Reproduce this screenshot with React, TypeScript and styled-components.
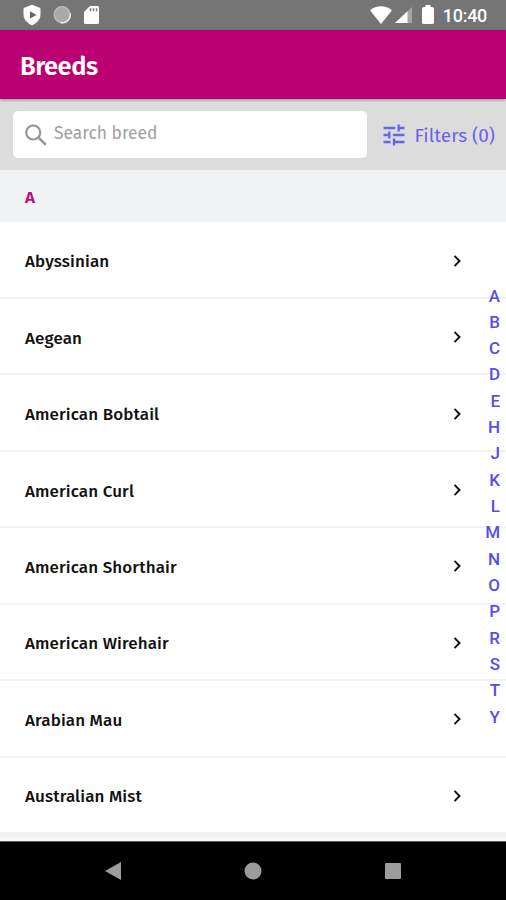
import React from "react";
import styled, { createGlobalStyle } from "styled-components";

const GlobalStyle = createGlobalStyle`
  *, *::before, *::after { box-sizing: border-box; }
  body { margin: 0; background: #f0f2f4; }
`;

const Screen = styled.div`
  position: relative;
  display: flex;
  flex-direction: column;
  width: 506px;
  height: 900px;
  overflow: hidden;
  background: #f0f2f4;
  font-family: "Fira Sans", "Noto Sans", sans-serif;
`;

const StatusBar = styled.div`
  display: flex;
  flex: none;
  align-items: center;
  justify-content: space-between;
  height: 30px;
  padding: 0 19px 0 22px;
  background: #757575;
`;

const StatusGroup = styled.div<{ $gap: number }>`
  display: flex;
  align-items: center;
  gap: ${(p) => p.$gap}px;
  svg { display: block; }
`;

const Clock = styled.span`
  color: #fff;
  font: 500 18px/30px Roboto, sans-serif;
  letter-spacing: -0.3px;
  padding-top: 2px;
`;

const Header = styled.header`
  position: relative;
  z-index: 1;
  flex: none;
  height: 69px;
  padding-left: 20px;
  background: #bb0072;
  box-shadow: 0 1px 3px rgba(0, 0, 0, 0.35);
`;

const Title = styled.h1`
  margin: 0;
  color: #fff;
  font-size: 25.5px;
  font-weight: 600;
  line-height: 73px;
  letter-spacing: -0.5px;
`;

const Toolbar = styled.div`
  display: flex;
  flex: none;
  align-items: flex-start;
  height: 71px;
  padding: 12px 11px 0 13px;
  background: #dcdcdc;
`;

const SearchBox = styled.div`
  display: flex;
  align-items: center;
  width: 354px;
  height: 47px;
  padding-left: 12px;
  border-radius: 5px;
  background: #fff;
`;

const Placeholder = styled.span`
  margin: -3px 0 0 5px;
  color: #a0a0a0;
  font-size: 17.4px;
`;

const Filters = styled.div`
  display: flex;
  align-items: center;
  height: 49px;
  margin-left: 13px;
  color: #6663ed;
  font-size: 19px;
  white-space: nowrap;
  svg { margin: -2px 7px 0 0; flex: none; }
`;

const SectionHeading = styled.h2`
  flex: none;
  height: 52px;
  margin: 0;
  padding-left: 25px;
  background: #f0f2f4;
  color: #b90d70;
  font-size: 17px;
  font-weight: 600;
  line-height: 55px;
`;

const BreedList = styled.ul`
  flex: none;
  height: 610px;
  margin: 0;
  padding: 0.5px 0 0;
  list-style: none;
  background: #fff;
`;

const BreedRow = styled.li`
  display: flex;
  align-items: center;
  justify-content: space-between;
  height: 76.45px;
  padding: 2px 43px 0 25px;
  border-bottom: 2px solid #f1f2f3;
  &:last-child { border-bottom-color: transparent; }
`;

const BreedName = styled.span`
  padding-top: 2px;
  color: #111;
  font-size: 17px;
  font-weight: 500;
  letter-spacing: 0.12px;
  white-space: nowrap;
`;

const LetterIndex = styled.nav`
  position: absolute;
  top: 282.5px;
  right: 6px;
  display: flex;
  flex-direction: column;
  align-items: flex-end;
  color: #544ef0;
  font: 500 17px/26.33px Roboto, sans-serif;
`;

const ListEnd = styled.div`
  flex: 1;
  background: linear-gradient(#f0f1f1 5px, #f9fafa 6px);
`;

const NavigationBar = styled.footer`
  display: flex;
  flex: none;
  align-items: center;
  justify-content: space-between;
  height: 59px;
  padding: 0 104px 1px;
  border-top: 1px solid #5c6261;
  background: #000;
`;

const breeds = [
  "Abyssinian",
  "Aegean",
  "American Bobtail",
  "American Curl",
  "American Shorthair",
  "American Wirehair",
  "Arabian Mau",
  "Australian Mist",
];

const letters = "ABCDEHJKLMNOPRSTY".split("");

const Chevron = () => (
  <svg width="12" height="14" viewBox="0 0 12 14" fill="none">
    <path d="M3.500 1.900 8.500 7l-5 5.100" stroke="#151515" strokeWidth="2" />
  </svg>
);

const NavIcon = ({ children }: { children: React.ReactNode }) => (
  <svg width="18" height="18" viewBox="0 0 18 18" fill="#9c9c9c">{children}</svg>
);

export default function App() {
  return (
    <Screen>
      <GlobalStyle />
      <StatusBar>
        <StatusGroup $gap={11}>
          <svg width="20" height="22" viewBox="0 0 20 22">
            <path d="M10 1.2 18 4.4v6.2c0 4.7-3.2 8.2-8 10.3-4.8-2.1-8-5.6-8-10.3V4.4z" fill="#fff" stroke="#fff" strokeLinejoin="round" />
            <path d="M8 7.2v7.4l6.600-3.700z" fill="#666" />
          </svg>
          <svg width="19" height="20" viewBox="0 0 19 20">
            <circle cx="9.3" cy="10" r="8.5" fill="#aaa" />
            <circle cx="9" cy="9.5" r="7.8" fill="none" stroke="#bcbcbc" strokeWidth="1.2" />
            <path d="M17.2 8.2a8 8 0 0 1-9.7 9.5" fill="none" stroke="#f0f0f0" strokeWidth="1.3" />
          </svg>
          <svg width="17" height="20" viewBox="0 0 17 20">
            <path d="M7 1h7.5A1.5 1.5 0 0 1 16 2.5v15a1.5 1.5 0 0 1-1.5 1.5h-12A1.5 1.5 0 0 1 1 17.5V7z" fill="#fff" />
            <path d="M7.5 3.3v3M10.5 3.3v3M13.5 3.3v3" stroke="#777" strokeWidth="1.5" />
          </svg>
        </StatusGroup>
        <StatusGroup $gap={3}>
          <svg width="22" height="18" viewBox="0 0 22 18">
            <path d="M0 4.2C6.5-1.1 15.5-1.1 22 4.2L11 18z" fill="#fff" />
          </svg>
          <svg width="18" height="18" viewBox="0 0 18 18">
            <path d="M0 17 17 1v16z" fill="#a4a4a4" />
            <path d="M0 17 12.5 5.2V17z" fill="#fff" />
          </svg>
          <svg width="24" height="20" viewBox="0 0 24 20">
            <path d="M9.5 0h5v2H16a2 2 0 0 1 2 2v13.5a1.5 1.5 0 0 1-1.5 1.5h-9A1.5 1.5 0 0 1 6 17.5V4a2 2 0 0 1 2-2h1.5z" fill="#fff" />
          </svg>
          <Clock>10:40</Clock>
        </StatusGroup>
      </StatusBar>
      <Header><Title>Breeds</Title></Header>
      <Toolbar>
        <SearchBox>
          <svg width="24" height="24" viewBox="0 0 24 24" fill="none" stroke="#969696" strokeWidth="2.2">
            <circle cx="8.2" cy="9.5" r="7" />
            <path d="m13.3 14.4 7.5 7.3" strokeWidth="2.6" />
          </svg>
          <Placeholder>Search breed</Placeholder>
        </SearchBox>
        <Filters>
          <svg width="28" height="28" viewBox="0 0 24 24" fill="currentColor">
            <path d="M3 17v2h6v-2H3zM3 5v2h10V5H3zm10 16v-2h8v-2h-8v-2h-2v6h2zM7 9v2H3v2h4v2h2V9H7zm14 4v-2H11v2h10zm-6-4h2V7h4V5h-4V3h-2v6z" />
          </svg>
          Filters (0)
        </Filters>
      </Toolbar>
      <SectionHeading>A</SectionHeading>
      <BreedList>
        {breeds.map((name) => (
          <BreedRow key={name}>
            <BreedName>{name}</BreedName>
            <Chevron />
          </BreedRow>
        ))}
      </BreedList>
      <ListEnd />
      <LetterIndex>
        {letters.map((letter) => <span key={letter}>{letter}</span>)}
      </LetterIndex>
      <NavigationBar>
        <NavIcon><path d="M1 9 17 0v18z" /></NavIcon>
        <NavIcon><circle cx="9" cy="9" r="8.5" /></NavIcon>
        <NavIcon><rect x="1" y="1" width="16" height="16" rx="1" /></NavIcon>
      </NavigationBar>
    </Screen>
  );
}
